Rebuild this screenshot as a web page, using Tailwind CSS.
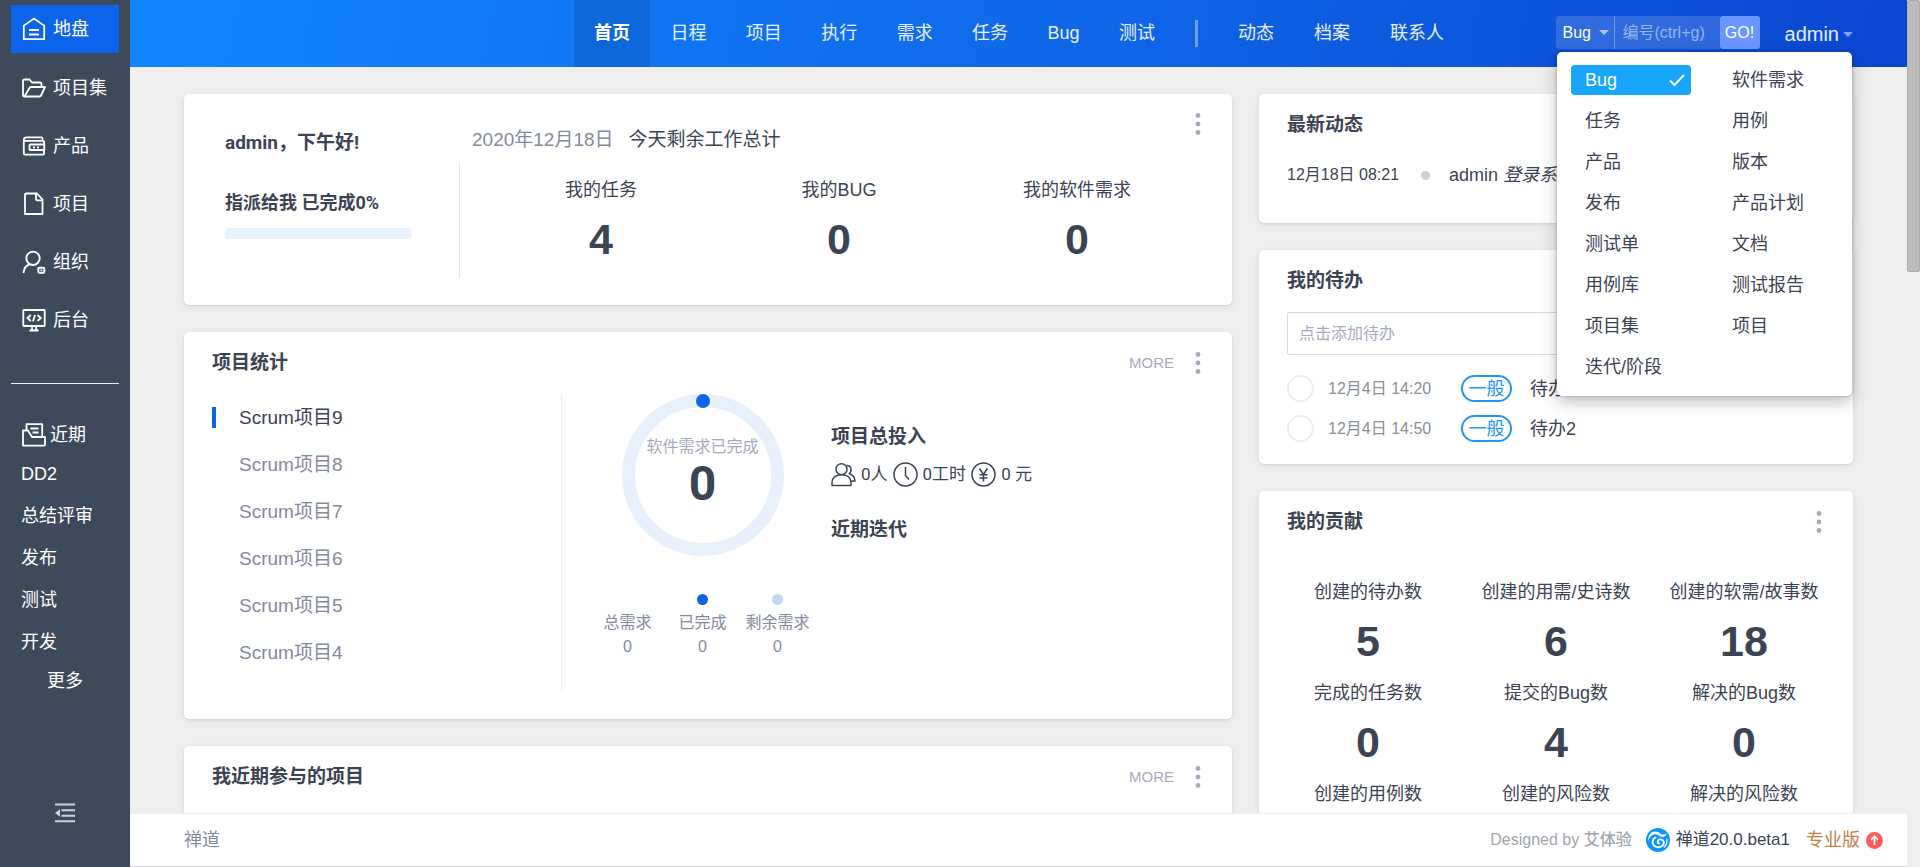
<!DOCTYPE html>
<html lang="zh-CN">
<head>
<meta charset="utf-8">
<title>地盘 - 禅道</title>
<script src="https://cdn.jsdelivr.net/npm/@tailwindcss/browser@4"></script>
</head>
<body class="flex h-screen overflow-hidden bg-[#eeeeee] font-['Liberation_Sans','Noto_Sans_CJK_SC',sans-serif] text-[18px] leading-6 text-[#3c4353]">

<svg class="hidden" aria-hidden="true">
  <symbol id="dots" viewBox="0 0 20 24"><g fill="#a6aabd"><circle cx="10" cy="3.5" r="2.4"/><circle cx="10" cy="12" r="2.4"/><circle cx="10" cy="20.5" r="2.4"/></g></symbol>
</svg>

<!-- Sidebar -->
<aside class="flex w-[130px] shrink-0 flex-col bg-[#3d4a5c] px-[11px] pt-[5px] text-white">
  <nav class="flex flex-col gap-[10px]" aria-label="主菜单">
    <a href="#" class="mb-px flex h-12 items-center gap-[7px] bg-[#0c64eb] pl-[11px] whitespace-nowrap">
      <svg class="size-6" viewBox="0 0 24 24" fill="none" stroke="currentColor" stroke-width="1.8"><path d="M1.800 22.200V8.600L12 1.600l10.200 7v13.600z"/><path d="M7 13h10M7 17.500h10"/></svg>地盘</a>
    <a href="#" class="flex h-12 items-center gap-[7px] pl-[11px] whitespace-nowrap">
      <svg class="size-6 shrink-0" viewBox="0 0 24 24" fill="none" stroke="currentColor" stroke-width="1.800" stroke-linejoin="round"><path d="M2.500 20.500c-1 0-1.500-.600-1.500-1.500V5c0-1 .6-1.500 1.500-1.500h5L10 6.500h8c1 0 1.500.6 1.500 1.500v3"/><path d="M2.500 20.500 7.500 12c.3-.6.8-1 1.500-1h14l-4 8.500c-.3.6-.8 1-1.500 1z"/></svg>项目集</a>
    <a href="#" class="flex h-12 items-center gap-[7px] pl-[11px] whitespace-nowrap">
      <svg class="size-6" viewBox="0 0 24 24" fill="none" stroke="currentColor" stroke-width="1.800" stroke-linejoin="round"><path d="M20.500 7V4.500c0-.8-.5-1.200-1.200-1.200H4.500c-1.600 0-2.700 1-2.700 2.400V19c0 1 .8 1.700 1.700 1.700h17.200c.9 0 1.300-.5 1.300-1.300V16M2 6.800h18.500c1 0 1.700.5 1.700 1.500v2.200"/><path d="M22.300 10.500H8.500c-.7 0-1 .4-1 1v3.500c0 .7.3 1 1 1h13.800z"/><path d="M11 13.300h2M15 13.300h2"/></svg>产品</a>
    <a href="#" class="flex h-12 items-center gap-[7px] pl-[11px] whitespace-nowrap">
      <svg class="size-6" viewBox="0 0 24 24" fill="none" stroke="currentColor" stroke-width="1.800" stroke-linejoin="round"><path d="M4 1.500h11l5.500 6V22H3V2.500c0-.6.4-1 1-1z"/><path d="M14 1.500V7c0 .8.500 1.300 1.300 1.300h5"/></svg>项目</a>
    <a href="#" class="flex h-12 items-center gap-[7px] pl-[11px] whitespace-nowrap">
      <svg class="size-6" viewBox="0 0 24 24" fill="none" stroke="currentColor" stroke-width="1.900"><circle cx="11" cy="8.300" r="6.700"/><path d="M1.500 23c.3-4.500 2.500-7.500 6.500-8.800"/><rect x="16.300" y="17.800" width="6" height="5" rx="1"/><path d="M18.500 20.300h1.800" stroke-width="1.500"/></svg>组织</a>
    <a href="#" class="flex h-12 items-center gap-[7px] pl-[11px] whitespace-nowrap">
      <svg class="size-6" viewBox="0 0 24 24" fill="none" stroke="currentColor" stroke-width="1.800"><rect x="1.300" y="2" width="21.400" height="16" rx=".5"/><path d="M8.800 7 5.500 10l3.300 3M15.500 7l3.300 3-3.300 3M13 7l-2 6.500M10 18v4M14 18v4M7.500 22.500h9"/></svg>后台</a>
  </nav>
  <hr class="mt-[39px] border-white/90">
  <div class="mt-[38px] flex h-[26px] items-center gap-1 pl-[11px]">
    <svg class="size-6" viewBox="0 0 24 24" fill="none" stroke="currentColor" stroke-width="1.800" stroke-linejoin="round"><path d="M1 22.500V7.500h5l4 6.500h13v7.500c0 .7-.4 1.200-1.200 1.200H2.200c-.7 0-1.200-.2-1.200-1.200z"/><path d="M4.500 7V1.200h15.700V14"/><path d="M8.500 5.500h8M10.500 9.500h6"/></svg>近期</div>
  <nav class="mt-[5px] flex flex-col pl-[10px] leading-[42px] whitespace-nowrap" aria-label="近期">
    <a href="#">DD2</a><a href="#">总结评审</a><a href="#">发布</a><a href="#">测试</a><a href="#">开发</a>
    <a href="#" class="mt-[6px] pl-[26px] leading-6">更多</a>
  </nav>
  <button type="button" class="mt-auto mb-11 self-center text-[#cbd2db]" aria-label="收起菜单">
    <svg class="size-5" viewBox="0 0 20 20" fill="currentColor"><path d="M0 .5h20v2H0zM6.500 6.200H20v2H6.500zM6.500 11.700H20v2H6.500zM0 17.300h20v2H0zM0 10l5-3.800v7.600z"/></svg>
  </button>
</aside>

<div class="flex min-w-0 flex-1 flex-col">
  <!-- Top bar -->
  <header class="relative z-10 flex h-[67px] shrink-0 justify-center bg-[linear-gradient(100deg,#1285ff_0%,#0f69e8_50%,#0a46d0_100%)]">
    <nav class="flex w-[889px] leading-[67px] whitespace-nowrap text-white/90" aria-label="地盘导航">
      <div class="flex w-[600px] justify-between">
        <a href="#" class="bg-[#0c67d8] px-5 font-bold text-white">首页</a>
        <a href="#" class="px-[19px]">日程</a><a href="#" class="px-[19px]">项目</a><a href="#" class="px-[19px]">执行</a><a href="#" class="px-[19px]">需求</a><a href="#" class="px-[19px]">任务</a><a href="#" class="px-[19px]">Bug</a><a href="#" class="px-[19px]">测试</a>
      </div>
      <span class="mx-[21px] h-[27px] w-[3px] self-center bg-white/40"></span>
      <div class="flex gap-[2px]"><a href="#" class="px-[19px]">动态</a><a href="#" class="px-[19px]">档案</a><a href="#" class="px-[19px]">联系人</a></div>
    </nav>
    <div class="absolute top-4 right-[54px] flex text-[16px]">
      <form class="flex h-[33px] leading-[33px] text-white" onsubmit="return false">
        <button type="button" aria-haspopup="true" aria-expanded="true" class="flex w-[59px] items-center gap-2 rounded-l-[4px] border-r border-white/30 bg-white/15 pb-px pl-[7px]">Bug
          <span class="border-x-5 border-t-5 border-x-transparent border-t-white/60"></span></button>
        <input type="text" aria-label="编号" placeholder="编号(ctrl+g)" class="w-[105px] bg-white/15 px-2 outline-none placeholder:text-white/50">
        <button type="submit" class="w-10 rounded-[3px] bg-[#6a96ff]">GO!</button>
      </form>
      <button type="button" class="ml-[25px] flex h-9 items-center gap-1 text-[20px] text-white/90">admin
        <span class="border-x-5 border-t-5 border-x-transparent border-t-white/50"></span></button>
    </div>
    <!-- Open type menu -->
    <div class="absolute top-[52px] right-[55px] grid w-[295px] grid-cols-[147fr_134fr] rounded-[5px] bg-white pt-[7px] pb-[9px] pl-[14px] shadow-[0_6px_16px_rgba(0,0,0,0.25),0_0_3px_rgba(0,0,0,0.3)] *:flex *:h-[41px] *:items-center *:pl-[14px]">
      <a href="#" class="pl-0!"><span class="flex h-[30px] w-[120px] items-center justify-between rounded-[4px] bg-[#18a6fd] pr-[6px] pl-[14px] text-white">Bug
        <svg class="size-4" viewBox="0 0 16 16" fill="none" stroke="currentColor" stroke-width="2"><path d="M1 8.500l4.500 4.500L15 3"/></svg></span></a><a href="#">软件需求</a>
      <a href="#">任务</a><a href="#">用例</a>
      <a href="#">产品</a><a href="#">版本</a>
      <a href="#">发布</a><a href="#">产品计划</a>
      <a href="#">测试单</a><a href="#">文档</a>
      <a href="#">用例库</a><a href="#">测试报告</a>
      <a href="#">项目集</a><a href="#">项目</a>
      <a href="#">迭代/阶段</a>
    </div>
  </header>

  <main class="grid min-h-0 flex-1 grid-cols-[1048fr_594fr] gap-[27px] overflow-hidden px-[54px] pt-[27px]">
    <div class="flex flex-col gap-[27px] *:shrink-0 *:rounded-[5px] *:bg-white *:shadow-[0_1px_2px_rgba(0,0,0,0.09),0_2px_8px_rgba(0,0,0,0.06)]">
      <!-- Welcome -->
      <section class="flex pb-[27px] pl-[41px]">
        <div class="w-[234px] pt-[37px] pr-[47px] font-['Roboto','Noto_Sans_CJK_SC',sans-serif] font-bold whitespace-nowrap">
          <h2 class="text-[19px] font-bold">admin，下午好!</h2>
          <p class="mt-9">指派给我 已完成0%</p>
          <div class="mt-[13px] h-[11px] rounded-[4px] bg-[#e9f2fb]" role="progressbar" aria-label="已完成" aria-valuenow="0"></div>
        </div>
        <div class="flex-1">
          <div class="flex items-start justify-between pt-[18px] pr-6 pl-[13px] text-[19px]">
            <p class="pt-4"><span class="mr-[15px] text-[#838a9d]">2020年12月18日</span>今天剩余工作总计</p>
            <button type="button" aria-label="更多操作"><svg class="h-6 w-5"><use href="#dots"/></svg></button>
          </div>
          <dl class="mt-[11px] grid grid-cols-3 border-l border-[#e2e4e8] pt-[15px] pr-9 pb-[14px] pl-[22px] text-center">
            <div><dt>我的任务</dt><dd class="mt-3 text-[43px] leading-[50px] font-bold">4</dd></div>
            <div><dt>我的BUG</dt><dd class="mt-3 text-[43px] leading-[50px] font-bold">0</dd></div>
            <div><dt>我的软件需求</dt><dd class="mt-3 text-[43px] leading-[50px] font-bold">0</dd></div>
          </dl>
        </div>
      </section>

      <!-- Project statistics -->
      <section class="pb-[29px]">
        <header class="flex h-[62px] items-center pr-6 pl-7">
          <h2 class="flex-1 text-[19px] font-bold">项目统计</h2>
          <a href="#" class="mr-[14px] text-[15px] text-[#a6aabd]">MORE</a>
          <button type="button" aria-label="更多操作"><svg class="h-6 w-5"><use href="#dots"/></svg></button>
        </header>
        <div class="flex pl-7">
          <ul class="w-[350px] border-r border-[#ebeef7] pb-[14px] text-[19px] text-[#838a9d] *:flex *:h-[47px] *:items-center">
            <li class="text-[#3c4353]"><span class="mr-[23px] h-[21px] w-1 bg-[#0c64eb]"></span><a href="#">Scrum项目9</a></li>
            <li class="pl-[27px]"><a href="#">Scrum项目8</a></li>
            <li class="pl-[27px]"><a href="#">Scrum项目7</a></li>
            <li class="pl-[27px]"><a href="#">Scrum项目6</a></li>
            <li class="pl-[27px]"><a href="#">Scrum项目5</a></li>
            <li class="pl-[27px]"><a href="#">Scrum项目4</a></li>
          </ul>
          <div class="ml-7 w-[225px] text-center text-[16px]">
            <div class="grid justify-items-center">
              <svg class="size-[162px] [grid-area:1/1]" viewBox="0 0 162 162"><circle cx="81" cy="81" r="74.500" fill="none" stroke="#e8f1fb" stroke-width="13"/><circle cx="81" cy="7" r="7" fill="#0c64eb"/></svg>
              <div class="pt-[41px] [grid-area:1/1]">
                <p class="text-[#a6aabd]">软件需求已完成</p>
                <p class="font-['Roboto',sans-serif] text-[48px] leading-[50px] font-bold">0</p>
              </div>
            </div>
            <dl class="mt-[38px] grid grid-cols-3 whitespace-nowrap text-[#838a9d]">
              <div><dt class="pt-[17px]">总需求</dt><dd>0</dd></div>
              <div><dt><span class="mx-auto mb-[6px] block size-[11px] rounded-full bg-[#0c64eb]"></span>已完成</dt><dd>0</dd></div>
              <div><dt><span class="mx-auto mb-[6px] block size-[11px] rounded-full bg-[#bfd9f5]"></span>剩余需求</dt><dd>0</dd></div>
            </dl>
          </div>
          <div class="ml-4 pt-[31px]">
            <h3 class="text-[19px] font-bold">项目总投入</h3>
            <p class="mt-3 flex h-[26px] items-center gap-[5px] font-['Roboto','Noto_Sans_CJK_SC',sans-serif] text-[17px]">
              <svg class="size-[25px]" viewBox="0 0 25 25" fill="none" stroke="currentColor" stroke-width="1.500" stroke-linejoin="round"><circle cx="10.500" cy="7.200" r="5.500"/><path d="M1 23.500v-3c0-4.500 3.500-7.800 9.500-7.800s9.500 3.300 9.500 7.800v3zM15.500 3.500c4-.5 6.500 4.500 2.700 8 3.800 1.500 5.800 4 5.800 7.500h-3.500"/></svg>0人
              <svg class="size-[25px]" viewBox="0 0 25 25" fill="none" stroke="currentColor" stroke-width="1.500"><circle cx="12.500" cy="12.500" r="11.500"/><path d="M12.500 5v8.500l3.500 4"/></svg>0工时
              <svg class="size-[25px]" viewBox="0 0 25 25" fill="none" stroke="currentColor" stroke-width="1.500"><circle cx="12.500" cy="12.500" r="11.500"/><path d="M8.500 6.500l4 6 4-6M12.500 12.500v7M8.500 12.700h8M8.500 16h8"/></svg>0 元
            </p>
            <h3 class="mt-[31px] text-[19px] font-bold">近期迭代</h3>
          </div>
        </div>
      </section>

      <!-- Recent projects -->
      <section class="pb-60">
        <header class="flex h-[62px] items-center pr-6 pl-7">
          <h2 class="flex-1 text-[19px] font-bold">我近期参与的项目</h2>
          <a href="#" class="mr-[14px] text-[15px] text-[#a6aabd]">MORE</a>
          <button type="button" aria-label="更多操作"><svg class="h-6 w-5"><use href="#dots"/></svg></button>
        </header>
      </section>
    </div>

    <div class="flex flex-col gap-[27px] *:shrink-0 *:rounded-[5px] *:bg-white *:shadow-[0_1px_2px_rgba(0,0,0,0.09),0_2px_8px_rgba(0,0,0,0.06)]">
      <!-- Latest activity -->
      <section class="pb-9 pl-7">
        <h2 class="flex h-[62px] items-center text-[19px] font-bold">最新动态</h2>
        <p class="mt-[7px] flex items-center whitespace-nowrap"><time class="text-[16px]">12月18日 08:21</time><span class="mr-[19px] ml-[22px] size-[9px] rounded-full bg-[#cbd0db]"></span><span>admin <em>登录系统</em></span></p>
      </section>

      <!-- To-do -->
      <section class="px-7 pb-[22px]">
        <h2 class="flex h-[62px] items-center text-[19px] font-bold">我的待办</h2>
        <input type="text" aria-label="点击添加待办" placeholder="点击添加待办" class="block h-[43px] w-full rounded-[2px] border border-[#d8dbde] px-[11px] text-[16px] placeholder:text-[#a6aabd]">
        <ul class="mt-5 flex flex-col gap-[13px] *:flex *:h-[27px] *:items-center">
          <li><input id="todo1" type="checkbox" class="mr-[14px] size-[27px] appearance-none rounded-full border-2 border-[#eeeeee]"><time class="w-[133px] text-[16px] text-[#8b8f98]">12月4日 14:20</time><span class="mr-[18px] flex h-[27px] w-[51px] items-center justify-center rounded-full border-2 border-[#2196f3] text-[#2196f3]">一般</span><label for="todo1">待办1</label></li>
          <li><input id="todo2" type="checkbox" class="mr-[14px] size-[27px] appearance-none rounded-full border-2 border-[#eeeeee]"><time class="w-[133px] text-[16px] text-[#8b8f98]">12月4日 14:50</time><span class="mr-[18px] flex h-[27px] w-[51px] items-center justify-center rounded-full border-2 border-[#2196f3] text-[#2196f3]">一般</span><label for="todo2">待办2</label></li>
        </ul>
      </section>

      <!-- Contributions -->
      <section class="pb-40">
        <header class="flex h-[62px] items-center pr-6 pl-7">
          <h2 class="flex-1 text-[19px] font-bold">我的贡献</h2>
          <button type="button" aria-label="更多操作"><svg class="h-6 w-5"><use href="#dots"/></svg></button>
        </header>
        <dl class="mt-[27px] grid grid-cols-3 gap-y-[15px] px-[15px] text-center whitespace-nowrap">
          <div><dt>创建的待办数</dt><dd class="mt-3 text-[43px] leading-[50px] font-bold">5</dd></div>
          <div><dt>创建的用需/史诗数</dt><dd class="mt-3 text-[43px] leading-[50px] font-bold">6</dd></div>
          <div><dt>创建的软需/故事数</dt><dd class="mt-3 text-[43px] leading-[50px] font-bold">18</dd></div>
          <div><dt>完成的任务数</dt><dd class="mt-3 text-[43px] leading-[50px] font-bold">0</dd></div>
          <div><dt>提交的Bug数</dt><dd class="mt-3 text-[43px] leading-[50px] font-bold">4</dd></div>
          <div><dt>解决的Bug数</dt><dd class="mt-3 text-[43px] leading-[50px] font-bold">0</dd></div>
          <div><dt>创建的用例数</dt></div>
          <div><dt>创建的风险数</dt></div>
          <div><dt>解决的风险数</dt></div>
        </dl>
      </section>
    </div>
  </main>

  <footer class="relative flex h-[54px] shrink-0 items-center border-t border-b border-t-[#eceef0] border-b-[#d5d8df] bg-white pr-6 pl-[54px] text-[17px]">
    <a href="#" class="flex-1 text-[18px] text-[#838a9d]">禅道</a>
    <span class="mr-[14px] text-[16px] text-[#a0a4ad]">Designed by <a href="#" class="font-medium">艾体验</a></span>
    <a href="#" class="mr-4 flex items-center gap-[6px]">
      <svg class="size-6" viewBox="0 0 24 24"><circle cx="12" cy="12" r="12" fill="#0c95fb"/><path fill="#fff" d="M2.500 13C1.800 8 4.500 3.500 9 3.500c4.500 0 5 3 8 3 1.600 0 2.800-.5 3.800-1.500-.5 3-2.800 4.300-5.300 3.800C12.500 8.200 11 5.800 8 6.500 4.800 7.200 3.200 9.500 2.500 13z"/><path fill="none" stroke="#fff" stroke-width="1.900" stroke-linecap="round" d="M9.500 9.500C6 11 5.500 15.500 8.500 18c3.500 2.600 8.800.8 9.300-3 .3-2.600-2.300-4.300-4.600-3.300-2 .9-2.100 3.300-.2 3.800"/><path fill="none" stroke="#fff" stroke-width="1.200" stroke-linecap="round" d="M20.800 11c.6 3-.4 6-2.600 8"/></svg>禅道20.0.beta1</a>
    <a href="#" class="flex items-center gap-[6px] text-[18px] text-[#c08046]">专业版
      <svg class="size-[17px]" viewBox="0 0 17 17" fill="none"><circle cx="8.500" cy="8.500" r="8.500" fill="#ff5d5d"/><path d="M8.500 13V4.500M5 7.800l3.500-3.500L12 7.800" stroke="#fff" stroke-width="1.700"/></svg></a>
  </footer>
</div>

<!-- Page scroll track -->
<div class="w-[13px] shrink-0 bg-[#eeeeee]" aria-hidden="true"><div class="h-[272px] rounded-[2px] border border-[#adadad] bg-[#bdbdbd]"></div></div>
</body>
</html>
